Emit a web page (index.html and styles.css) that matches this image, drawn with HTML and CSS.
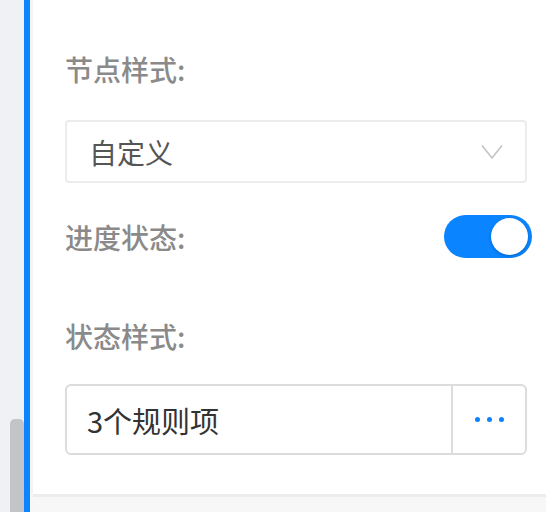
FILE: index.html
```html
<!DOCTYPE html>
<html lang="zh">
<head>
<meta charset="utf-8">
<link rel="stylesheet" href="styles.css">
</head>
<body>
<div class="frame">
  <div class="gutter"><div class="thumb"></div></div>
  <div class="accent"></div>
  <div class="main">
    <div class="panel">
      <div class="label first">节点样式:</div>
      <div class="select">
        <span class="select-text">自定义</span>
        <svg class="chevron" width="22" height="16" viewBox="0 0 22 16"><path d="M1 1.5 L11 14 L21 1.5" fill="none" stroke="#c4c4c4" stroke-width="1.6"/></svg>
      </div>
      <div class="row">
        <div class="label">进度状态:</div>
        <div class="toggle"><div class="knob"></div></div>
      </div>
      <div class="label third">状态样式:</div>
      <div class="rules">
        <span class="rules-text">3个规则项</span>
        <div class="more"><i></i><i></i><i></i></div>
      </div>
    </div>
    <div class="footer"></div>
  </div>
</div>
</body>
</html>
```
FILE: styles.css
```css
html, body {
  margin: 0;
  padding: 0;
}
body {
  width: 546px;
  height: 512px;
  overflow: hidden;
  background: #f0f1f5;
  font-family: "Noto Sans CJK SC", "Noto Sans", sans-serif;
}
.frame {
  display: flex;
  height: 512px;
}
.gutter {
  width: 24px;
  flex: none;
  background: #f0f1f5;
  padding: 419px 0 0 10px;
  box-sizing: border-box;
}
.thumb {
  width: 14px;
  height: 93px;
  background: #c3c4c8;
  border-radius: 5px 5px 0 0;
}
.accent {
  width: 6px;
  flex: none;
  background: #0a84ff;
}
.main {
  flex: 1;
  display: flex;
  flex-direction: column;
  background: #f7f7f7;
}
.panel {
  height: 494px;
  flex: none;
  box-sizing: border-box;
  background: #fff;
  border-left: 3px solid #f4f4f5;
  padding: 49px 19px 0 32px;
  display: flex;
  flex-direction: column;
}
.footer {
  height: 3px;
  background: #ececec;
  margin-left: 3px;
}
.label {
  font-size: 28px;
  line-height: 40px;
  height: 40px;
  color: #8a8a8a;
  font-weight: 500;
}
.select {
  margin-top: 31px;
  height: 63px;
  box-sizing: border-box;
  border: 2px solid #ececec;
  border-radius: 4px;
  display: flex;
  align-items: center;
  justify-content: space-between;
  padding: 0 22px 0 22px;
}
.select-text {
  font-size: 28px;
  color: #555;
}
.chevron {
  display: block;
}
.row {
  margin-top: 32px;
  height: 43px;
  display: flex;
  align-items: center;
  justify-content: space-between;
}
.toggle {
  width: 88px;
  height: 43px;
  border-radius: 22px;
  background: #0a84ff;
  box-sizing: border-box;
  padding: 3px 4px;
  display: flex;
  justify-content: flex-end;
  margin-right: -5px;
}
.knob {
  width: 37px;
  height: 37px;
  border-radius: 50%;
  background: #fff;
  box-shadow: 0 1px 3px rgba(0,0,0,0.25);
}
.third {
  margin-top: 58px;
}
.rules {
  margin-top: 28px;
  height: 71px;
  box-sizing: border-box;
  border: 2px solid #dcdcdc;
  border-radius: 6px;
  display: flex;
  align-items: stretch;
}
.rules-text {
  flex: 1;
  display: flex;
  align-items: center;
  padding-left: 20px;
  font-size: 29px;
  color: #333;
}
.more {
  width: 72px;
  border-left: 2px solid #dcdcdc;
  display: flex;
  align-items: center;
  justify-content: center;
  gap: 7px;
}
.more i {
  width: 5px;
  height: 5px;
  border-radius: 50%;
  background: #0a84ff;
}
```
